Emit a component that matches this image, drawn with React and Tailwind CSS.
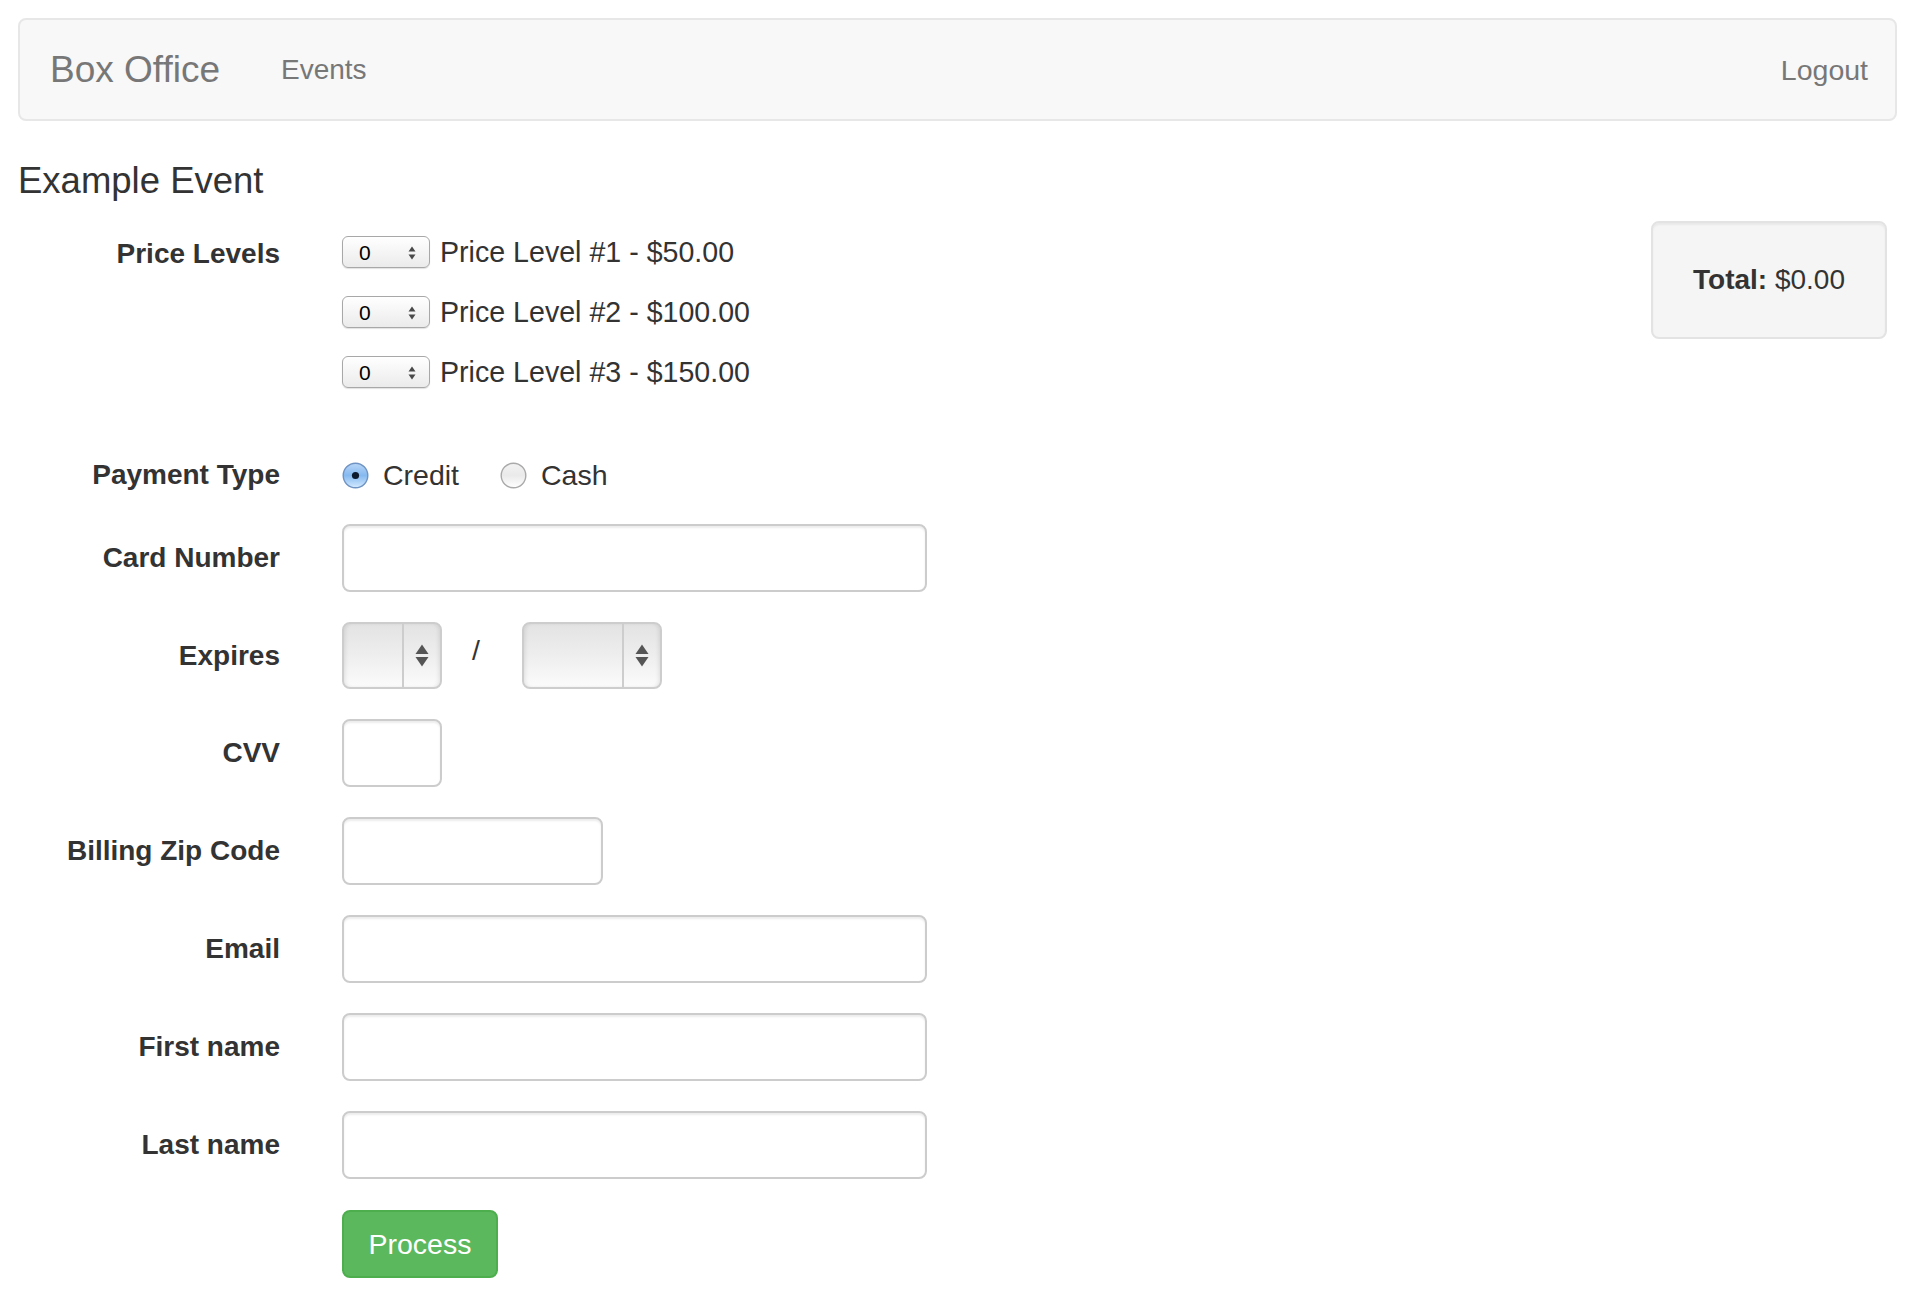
import React from "react";

const priceLevels = [
  { id: 1, price: "$50.00" },
  { id: 2, price: "$100.00" },
  { id: 3, price: "$150.00" },
];

const SmallSelect = () => (
  <div className="relative flex h-[32px] w-[88px] shrink-0 items-center rounded-[6px] border border-[#a8a8a8] bg-linear-to-b from-white to-[#ebebeb] pl-[16px] text-[21px] leading-none text-black shadow-[0_1px_1px_rgba(0,0,0,0.12)]">
    0
    <svg className="absolute right-[13px] top-[9px]" width="8" height="14" viewBox="0 0 8 14">
      <path d="M4 0.5 L7.5 5.5 L0.5 5.5 Z" fill="#4a4a4a" />
      <path d="M0.5 8.5 L7.5 8.5 L4 13.5 Z" fill="#4a4a4a" />
    </svg>
  </div>
);

const BigSelect = ({ width }) => (
  <div className={`flex h-[67px] ${width} overflow-hidden rounded-[8px] border-2 border-[#cdcdcd] bg-linear-to-b from-[#e3e3e3] via-[#eeeeee] to-[#fbfbfb] shadow-[inset_3px_0_4px_-2px_rgba(0,0,0,0.1),inset_-3px_0_4px_-2px_rgba(0,0,0,0.1)]`}>
    <div className="flex-1" />
    <div className="flex w-[38px] items-center justify-center border-l-2 border-[#cdcdcd]">
      <svg width="14" height="24" viewBox="0 0 14 24">
        <path d="M7 0.5 L13.5 10 L0.5 10 Z" fill="#555" />
        <path d="M0.5 13 L13.5 13 L7 22.5 Z" fill="#555" />
      </svg>
    </div>
  </div>
);

const Radio = ({ checked }) => (
  <svg width="27" height="27" viewBox="0 0 27 27" className="shrink-0">
    <defs>
      <linearGradient id="radioOn" x1="0" y1="0" x2="0" y2="1">
        <stop offset="0" stopColor="#b9d6f7" />
        <stop offset="0.5" stopColor="#86b9f0" />
        <stop offset="1" stopColor="#d4ebff" />
      </linearGradient>
      <linearGradient id="radioOff" x1="0" y1="0" x2="0" y2="1">
        <stop offset="0" stopColor="#f2f2f2" />
        <stop offset="0.5" stopColor="#eaeaea" />
        <stop offset="1" stopColor="#ffffff" />
      </linearGradient>
    </defs>
    <circle
      cx="13.5"
      cy="13.5"
      r="12.3"
      fill={checked ? "url(#radioOn)" : "url(#radioOff)"}
      stroke={checked ? "#6f93c2" : "#a9a9a9"}
      strokeWidth="1.4"
    />
    {checked && <circle cx="13.5" cy="13.5" r="3.6" fill="#0d1a2e" />}
  </svg>
);

const TextInput = ({ width }) => (
  <input
    type="text"
    className={`h-[68px] ${width} rounded-[8px] border-2 border-[#cccccc] bg-white shadow-[inset_0_2px_2px_rgba(0,0,0,0.075)] outline-none`}
  />
);

const Row = ({ label, children, className = "" }) => (
  <div className={`flex items-center ${className}`}>
    <div className="w-[262px] shrink-0 text-right text-[28px] font-bold leading-[40px]">{label}</div>
    <div className="ml-[62px] flex items-center">{children}</div>
  </div>
);

export default function App() {
  return (
    <div className="min-h-screen w-full bg-white font-['Liberation_Sans',Arial,Helvetica,sans-serif] text-[#333]">
      <div className="pl-[18px] pr-[21px] pt-[18px]">
        {/* navbar */}
        <nav className="flex h-[103px] items-center justify-between rounded-[8px] border-2 border-[#e7e7e7] bg-[#f8f8f8] pl-[30px] pr-[27px] text-[#777]">
          <div className="flex items-center">
            <span className="text-[37px] leading-[40px]">Box Office</span>
            <span className="ml-[61px] text-[28px] leading-[40px]">Events</span>
          </div>
          <span className="text-[28.5px] leading-[40px]">Logout</span>
        </nav>

        <h4 className="mt-[40px] text-[36.5px] font-medium leading-[40px]">Example Event</h4>

        {/* price levels + total */}
        <div className="mt-[20px] flex items-start justify-between">
          <div className="flex">
            <div className="w-[262px] shrink-0 pt-[13px] text-right text-[28px] font-bold leading-[40px]">Price Levels</div>
            <div className="ml-[62px] flex flex-col gap-[28px] pt-[15px]">
              {priceLevels.map((level) => (
                <div key={level.id} className="flex h-[32px] items-center">
                  <SmallSelect />
                  <span className="ml-[10px] text-[28.6px] leading-[32px]">
                    Price Level #{level.id} - {level.price}
                  </span>
                </div>
              ))}
            </div>
          </div>
          <div className="mr-[10px] flex h-[118px] w-[236px] items-center justify-center rounded-[8px] border-2 border-[#e3e3e3] bg-[#f5f5f5] text-[28px] shadow-[inset_0_2px_2px_rgba(0,0,0,0.05)]">
            <span>
              <b>Total:</b> $0.00
            </span>
          </div>
        </div>

        {/* payment form */}
        <Row label="Payment Type" className="mt-[67px]">
          <Radio checked />
          <span className="ml-[14px] text-[28.5px] leading-[40px]">Credit</span>
          <span className="ml-[41px]">
            <Radio />
          </span>
          <span className="ml-[14px] text-[28.5px] leading-[40px]">Cash</span>
        </Row>

        <Row label="Card Number" className="mt-[29px]">
          <TextInput width="w-[585px]" />
        </Row>

        <Row label="Expires" className="mt-[30px]">
          <BigSelect width="w-[100px]" />
          <span className="ml-[30px] mr-[42px] -mt-[12px] text-[28.5px] leading-[40px]">/</span>
          <BigSelect width="w-[140px]" />
        </Row>

        <Row label="CVV" className="mt-[30px]">
          <TextInput width="w-[100px]" />
        </Row>

        <Row label="Billing Zip Code" className="mt-[30px]">
          <TextInput width="w-[261px]" />
        </Row>

        <Row label="Email" className="mt-[30px]">
          <TextInput width="w-[585px]" />
        </Row>

        <Row label="First name" className="mt-[30px]">
          <TextInput width="w-[585px]" />
        </Row>

        <Row label="Last name" className="mt-[30px]">
          <TextInput width="w-[585px]" />
        </Row>

        <Row label="" className="mt-[31px]">
          <button
            type="button"
            className="h-[68px] w-[156px] rounded-[8px] border-2 border-[#4cae4c] bg-[#5cb85c] text-[28.5px] text-white"
          >
            Process
          </button>
        </Row>
      </div>
    </div>
  );
}
